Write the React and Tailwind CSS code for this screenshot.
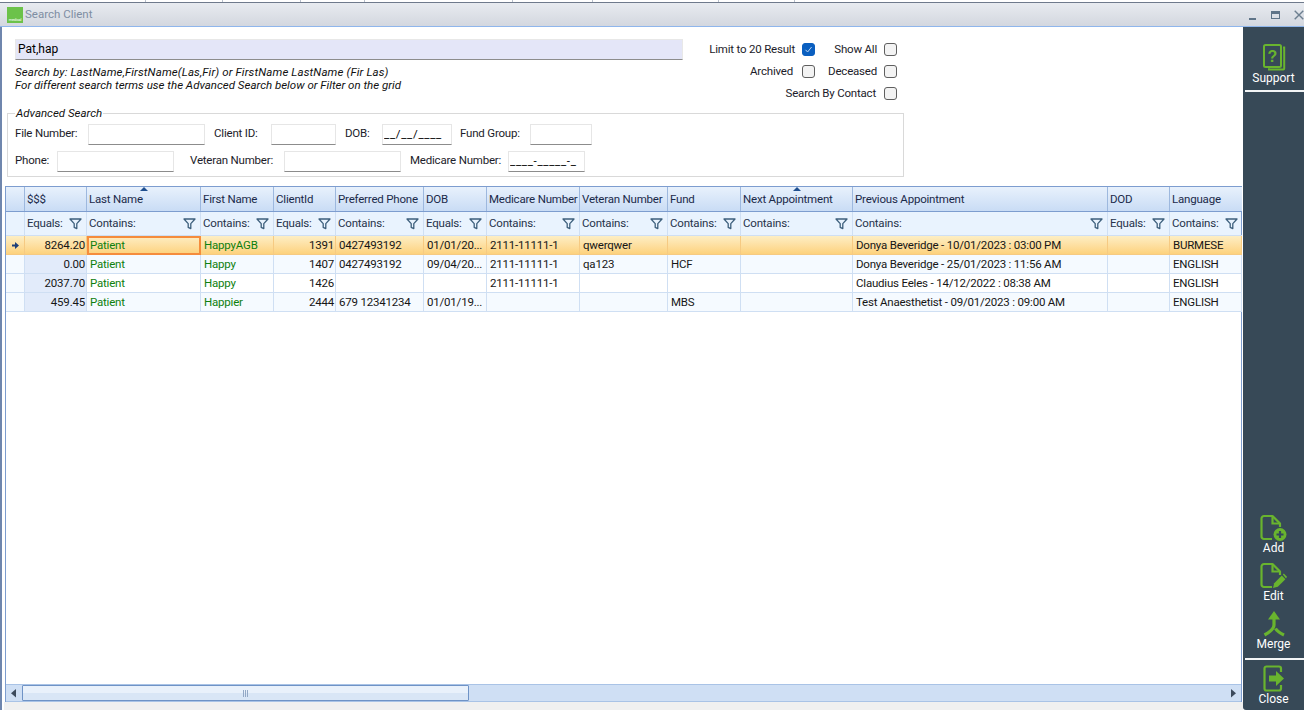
const columns = [
  { title: "", filter: "" },
  { title: "$$$", filter: "Equals:" },
  { title: "Last Name", filter: "Contains:", sorted: true },
  { title: "First Name", filter: "Contains:" },
  { title: "ClientId", filter: "Equals:" },
  { title: "Preferred Phone", filter: "Contains:" },
  { title: "DOB", filter: "Equals:" },
  { title: "Medicare Number", filter: "Contains:" },
  { title: "Veteran Number", filter: "Contains:" },
  { title: "Fund", filter: "Contains:" },
  { title: "Next Appointment", filter: "Contains:", sorted: true },
  { title: "Previous Appointment", filter: "Contains:" },
  { title: "DOD", filter: "Equals:" },
  { title: "Language", filter: "Contains:" },
];

const rows = [
  ["8264.20", "Patient", "HappyAGB", "1391", "0427493192", "01/01/20...", "2111-11111-1", "qwerqwer", "", "", "Donya Beveridge - 10/01/2023 : 03:00 PM", "", "BURMESE"],
  ["0.00", "Patient", "Happy", "1407", "0427493192", "09/04/20...", "2111-11111-1", "qa123", "HCF", "", "Donya Beveridge - 25/01/2023 : 11:56 AM", "", "ENGLISH"],
  ["2037.70", "Patient", "Happy", "1426", "", "", "2111-11111-1", "", "", "", "Claudius Eeles - 14/12/2022 : 08:38 AM", "", "ENGLISH"],
  ["459.45", "Patient", "Happier", "2444", "679 12341234", "01/01/19...", "", "", "MBS", "", "Test Anaesthetist - 09/01/2023 : 09:00 AM", "", "ENGLISH"],
];

const gridCols = "grid grid-cols-[19px_62px_114px_73px_62px_88px_63px_93px_88px_73px_112px_255px_62px_72px]";

const FunnelIcon = () => (
  <svg width="13" height="13" viewBox="0 0 13 13" fill="none" className="shrink-0">
    <path d="M1 2h11L7.8 6.6v5L5.2 10.4V6.6z" stroke="#3d5f7c" strokeWidth="1.3" strokeLinejoin="round" />
  </svg>
);

const Checkbox = ({ checked }) => (
  <span className={`w-[13px] h-[13px] rounded-[3px] flex items-center justify-center shrink-0 border ${checked ? "bg-[#0a5fc0] border-[#0a5fc0]" : "bg-[#f3f3f3] border-[#5f5f5f]"}`}>
    {checked && (
      <svg width="9" height="9" viewBox="0 0 9 9" fill="none">
        <path d="M1.5 4.8 3.6 7 7.6 2" stroke="#b9d4f2" strokeWidth="1" />
      </svg>
    )}
  </span>
);

const Option = ({ label, checked, gap = "gap-[7px]" }) => (
  <div className={`flex items-center justify-end ${gap}`}>
    <span className="mt-[2px]">{label}</span>
    <Checkbox checked={checked} />
  </div>
);

const Field = ({ width, value = "", spacing = "" }) => (
  <input
    readOnly
    value={value}
    className={`${width} ${spacing} h-[21px] shrink-0 bg-white border border-[#e6e6e6] border-b-[#8c8c8c] px-px text-[11.5px] text-black outline-none`}
  />
);

const SidebarButton = ({ label, icon, className = "" }) => (
  <div className={`flex flex-col items-center text-white text-[12px] leading-[14px] tracking-normal ${className}`}>
    {icon}
    <span>{label}</span>
  </div>
);

const green = "#69b42e";

const SupportIcon = (
  <svg width="24" height="28" viewBox="0 0 24 28" fill="none">
    <rect x="2" y="2" width="17" height="22" rx="1.5" stroke={green} strokeWidth="2" />
    <path d="M21 4.5h1.2v21a1 1 0 0 1-1 1H7v-1.2" stroke={green} strokeWidth="2" />
    <text x="10.5" y="19" textAnchor="middle" fontSize="16" fontWeight="700" fill={green} fontFamily="Liberation Sans, sans-serif">?</text>
  </svg>
);

const FileShape = () => (
  <path d="M12 25H4a2.5 2.5 0 0 1-2.5-2.5v-18A2.5 2.5 0 0 1 4 2h8.5L20 9.5V13" stroke={green} strokeWidth="2.2" strokeLinejoin="round" fill="none" />
);

const AddIcon = (
  <svg width="27" height="27" viewBox="0 0 27 27" fill="none">
    <FileShape />
    <path d="M12.5 2v7.5H20" stroke={green} strokeWidth="2.2" />
    <circle cx="20" cy="20.5" r="6.5" fill={green} />
    <path d="M20 17v7M16.5 20.5h7" stroke="#34495a" strokeWidth="2.2" />
  </svg>
);

const EditIcon = (
  <svg width="27" height="27" viewBox="0 0 27 27" fill="none">
    <FileShape />
    <path d="M12.5 2v7.5H20" stroke={green} strokeWidth="2.2" />
    <path d="M13 26l1.2-4.8 7.6-7.6 3.6 3.6-7.6 7.6z" fill={green} />
    <path d="M22.8 12.6l1-1 3.2 3.2-1 1.6z" fill={green} />
  </svg>
);

const MergeIcon = (
  <svg width="22" height="27" viewBox="0 0 22 27" fill="none">
    <path d="M11 1l6 8.5H5z" fill={green} />
    <path d="M11 8v7c0 4-4 7-9.5 10" stroke={green} strokeWidth="3.2" />
    <path d="M12.5 18.5c1.6 2.6 4.4 4.6 8.5 6.5" stroke={green} strokeWidth="3.2" />
  </svg>
);

const CloseIcon = (
  <svg width="22" height="27" viewBox="0 0 22 27" fill="none">
    <path d="M18 7V3.5A2 2 0 0 0 16 1.5H3.5a2 2 0 0 0-2 2v20a2 2 0 0 0 2 2H16a2 2 0 0 0 2-2V20" stroke={green} strokeWidth="2.2" />
    <path d="M6 10.5h7V6l8 7.5-8 7.5v-4.5H6z" fill={green} />
  </svg>
);

const ScrollArrow = ({ dir }) => (
  <svg width="6" height="9" viewBox="0 0 6 9">
    <path d={dir === "left" ? "M5 0v8.5L0 4.2z" : "M1 0v8.5l5-4.3z"} fill="#3c4a5c" />
  </svg>
);

const DataRow = ({ row, index }) => {
  const selected = index === 0;
  const stripe = index % 2 === 1 || index === 3 ? "bg-[#f5faff]" : "bg-white";
  return (
    <div className={`${gridCols} h-[19px] ${selected ? "bg-gradient-to-b from-[#fdeec4] to-[#fdd078]" : ""}`}>
      <div className={`flex items-center justify-center border-r border-b ${selected ? "border-[#f6ca82]" : "border-[#cfdff3] bg-[#f5faff]"}`}>
        {selected && (
          <svg width="7" height="7" viewBox="0 0 7 7">
            <path d="M0 2.4h3V0l4 3.5L3 7V4.6H0z" fill="#1d3f7a" />
          </svg>
        )}
      </div>
      {row.map((value, i) => {
        const isName = i === 1 || i === 2;
        const isRight = i === 0 || i === 3;
        const active = selected && i === 1;
        return (
          <div
            key={i}
            className={[
              "flex items-center whitespace-nowrap overflow-hidden",
              active ? "pl-[1px]" : isRight ? "justify-end pr-[1px] pt-px" : "pl-[3px] pt-px",
              isName ? "text-[#0e800e]" : "text-[#161616]",
              active ? "border-2 border-[#f58c3c]" : selected ? "border-r border-b border-[#f6ca82]" : "border-r border-b border-[#cfdff3]",
              !selected ? (i === 0 ? "bg-[#e2ebfa]" : stripe) : "",
            ].join(" ")}
          >
            {value}
          </div>
        );
      })}
    </div>
  );
};

export default function App() {
  return (
    <div className="w-[1304px] h-[710px] overflow-hidden flex flex-col bg-white text-[11.5px] tracking-[-0.2px] text-[#1c1c2a] font-['Roboto','Liberation_Sans',sans-serif]">
      {/* window behind */}
      <div className="h-[3px] shrink-0 flex bg-white border-b border-[#6f7a8c]">
        <span className="w-[146px] border-r border-[#b9c0cc]" />
        <span className="w-[77px] border-r border-[#b9c0cc]" />
        <span className="w-[78px] border-r border-[#b9c0cc]" />
        <span className="w-[64px] border-r border-[#b9c0cc]" />
        <span className="w-[148px] border-r border-[#b9c0cc]" />
        <span className="w-[80px] border-r border-[#b9c0cc]" />
        <span className="w-[126px] border-r border-[#b9c0cc]" />
        <span className="w-[76px] border-r border-[#b9c0cc]" />
      </div>

      <div className="h-[24px] shrink-0 flex items-center pl-[7px] bg-gradient-to-b from-[#e8ebf0] to-[#d3d7df] border-b border-[#8fb6ec]">
        <div className="w-[16px] h-[16px] bg-[#6cc24a] flex items-end justify-center overflow-hidden">
          <span className="text-[4px] leading-[6px] text-white">medical</span>
        </div>
        <span className="ml-[2px] text-[#7e8ea3] text-[11.5px] tracking-normal">Search Client</span>
        <div className="ml-auto flex items-center">
          <span className="w-[7px] h-[2px] mt-[8px] bg-[#5f7488]" />
          <span className="ml-[15px] w-[9px] h-[8px] border border-[#5f7488] border-t-[3px]" />
          <svg width="10" height="10" viewBox="0 0 10 10" className="ml-[14px]">
            <path d="M.7.7l8.6 8.6M9.3.7.7 9.3" stroke="#6d7f90" strokeWidth="1.4" />
          </svg>
        </div>
      </div>

      <div className="flex-1 flex min-h-0">
        <main className="w-[1243px] flex flex-col border-l-2 border-[#6f86ad]">
          <section className="h-[159px] shrink-0">
            <div className="flex">
              <div className="ml-[13px] w-[668px] pt-[12px]">
                <div className="h-[21px] flex items-center px-[2px] pb-[2px] bg-[#e4e6f8] border border-[#e8e8e8] border-b-[#8c8c8c] text-[12px] tracking-normal text-black">Pat,hap</div>
                <p className="mt-[6px] italic leading-[13px] text-[#111] tracking-normal">
                  <span className="tracking-[0.12px]">Search by: LastName,FirstName(Las,Fir) or FirstName LastName (Fir Las)</span>
                  <br />
                  For different search terms use the Advanced Search below or Filter on the grid
                </p>
              </div>
              <div className="ml-[7px] w-[207px] pt-[11px] grid grid-cols-[125px_82px] auto-rows-[22px] items-center">
                <Option label="Limit to 20 Result" checked />
                <Option label="Show All" />
                <Option label="Archived" gap="gap-[9px]" />
                <Option label="Deceased" />
                <div className="col-span-2">
                  <Option label="Search By Contact" gap="gap-[8px]" />
                </div>
              </div>
            </div>

            <fieldset className="ml-[5px] mt-[3px] w-[897px] h-[70px] border border-[#d9d9d9]">
              <legend className="ml-[7px] px-px italic leading-[13px] text-[#111] tracking-normal">Advanced Search</legend>
              <div className="mt-[3px] pl-[7px] h-[22px] flex items-center">
                <span className="w-[73px] shrink-0">File Number:</span>
                <Field width="w-[117px]" />
                <span className="ml-[9px] w-[57px] shrink-0">Client ID:</span>
                <Field width="w-[65px]" />
                <span className="ml-[9px] w-[37px] shrink-0">DOB:</span>
                <Field width="w-[70px]" value="__/__/____" spacing="tracking-[0.7px]" />
                <span className="ml-[8px] w-[70px] shrink-0">Fund Group:</span>
                <Field width="w-[62px]" />
              </div>
              <div className="mt-[5px] pl-[7px] h-[22px] flex items-center">
                <span className="w-[42px] shrink-0">Phone:</span>
                <Field width="w-[117px]" />
                <span className="ml-[16px] w-[94px] shrink-0">Veteran Number:</span>
                <Field width="w-[117px]" />
                <span className="ml-[9px] w-[98px] shrink-0">Medicare Number:</span>
                <Field width="w-[77px]" value="____-_____-_" spacing="tracking-[0.7px]" />
              </div>
            </fieldset>
          </section>

          <section className="ml-[3px] w-[1237px] flex-1 min-h-0 flex flex-col border-x border-[#7d9dcf]">
            <div className={`${gridCols} h-[26px] shrink-0 border-t border-b border-[#7d9dcf]`}>
              {columns.map((col, i) => (
                <div key={i} className="relative flex items-center pl-[2px] pt-px border-r border-[#9db8de] last:border-r-0 whitespace-nowrap overflow-hidden bg-gradient-to-b from-[#e8f1fc] to-[#c9dcf5] text-[#1b2a4a]">
                  {col.sorted && (
                    <span className="absolute top-0 left-1/2 -translate-x-1/2 w-0 h-0 border-x-[4px] border-x-transparent border-b-[4px] border-b-[#1f4f8f]" />
                  )}
                  {col.title}
                </div>
              ))}
            </div>
            <div className={`${gridCols} h-[24px] shrink-0 bg-[#e9f3fe]`}>
              {columns.map((col, i) => (
                <div key={i} className="flex items-center justify-between pl-[2px] pr-[4px] border-r border-b border-[#cfdff3] last:border-r-0 text-[#26324a]">
                  {col.filter && <span>{col.filter}</span>}
                  {col.filter && <FunnelIcon />}
                </div>
              ))}
            </div>
            {rows.map((row, i) => (
              <DataRow key={i} row={row} index={i} />
            ))}

            <div className="mt-auto h-[18px] shrink-0 flex items-stretch bg-[#cfdff4] border-t border-b border-[#a9c3e6]">
              <div className="w-[16px] flex items-center justify-center">
                <ScrollArrow dir="left" />
              </div>
              <div className="w-[447px] relative rounded-[1px] border border-[#6f93c6] bg-gradient-to-b from-[#e9f1fb] from-50% to-[#d9e6f6] to-50% flex items-center justify-center gap-px">
                <span className="w-px h-[7px] bg-[#94a9c6]" />
                <span className="w-px h-[7px] bg-[#94a9c6]" />
                <span className="w-px h-[7px] bg-[#94a9c6]" />
              </div>
              <div className="ml-auto w-[17px] flex items-center justify-center">
                <ScrollArrow dir="right" />
              </div>
            </div>
          </section>
          <div className="h-[8px] shrink-0 ml-[2px] bg-[#f0f0f0]" />
        </main>

        <aside className="w-[61px] flex flex-col bg-[#374957] rounded-bl-[3px]">
          <SidebarButton label="Support" icon={SupportIcon} className="pt-[16px]" />
          <div className="mt-[5px] ml-[2px] h-[2px] bg-[#f2f4f5]" />
          <div className="mt-auto">
            <SidebarButton label="Add" icon={AddIcon} />
            <SidebarButton label="Edit" icon={EditIcon} className="mt-[7px]" />
            <SidebarButton label="Merge" icon={MergeIcon} className="mt-[7px]" />
            <div className="mt-[7px] ml-[2px] h-[2px] bg-[#f2f4f5]" />
            <SidebarButton label="Close" icon={CloseIcon} className="mt-[5px] pb-[4px]" />
          </div>
        </aside>
      </div>
    </div>
  );
}
